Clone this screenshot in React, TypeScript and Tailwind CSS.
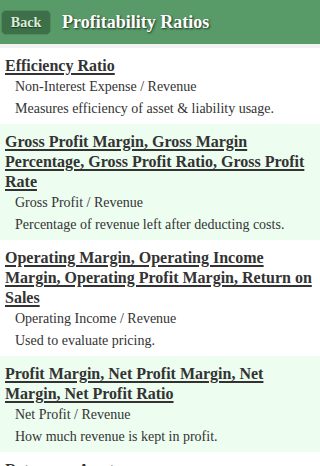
const RATIOS = [
  {
    title: 'Efficiency Ratio',
    formula: 'Non-Interest Expense / Revenue',
    note: 'Measures efficiency of asset & liability usage.',
  },
  {
    title: 'Gross Profit Margin, Gross Margin Percentage, Gross Profit Ratio, Gross Profit Rate',
    formula: 'Gross Profit / Revenue',
    note: 'Percentage of revenue left after deducting costs.',
  },
  {
    title: 'Operating Margin, Operating Income Margin, Operating Profit Margin, Return on Sales',
    formula: 'Operating Income / Revenue',
    note: 'Used to evaluate pricing.',
  },
  {
    title: 'Profit Margin, Net Profit Margin, Net Margin, Net Profit Ratio',
    formula: 'Net Profit / Revenue',
    note: 'How much revenue is kept in profit.',
  },
  {
    title: 'Return on Assets',
    formula: 'Net Income / Total Assets',
    note: 'How efficiently assets generate profit.',
  },
];

export default function App() {
  return (
    <div className="w-[320px] h-[466px] overflow-hidden bg-white font-['Liberation_Serif',serif] text-[#333]">
      <div className="h-[44px] bg-[#589a68] flex items-center pl-px">
        <button className="h-[25px] w-[50px] rounded-[5px] bg-[#3d6f48] border border-[#4f8a5c] text-[14px] font-bold text-[#dbeedd] [text-shadow:0_1px_1px_#1d3a24]">
          Back
        </button>
        <h1 className="ml-[11px] text-[18px] font-bold text-white [text-shadow:1px_1px_2px_#1c3322]">
          Profitability Ratios
        </h1>
      </div>
      <div className="h-[4px] bg-[#f2f2f2]" />
      {RATIOS.map((r, i) => (
        <div key={r.title} className={`pl-[5px] pr-2 pt-[8px] pb-[4px] ${i % 2 ? 'bg-[#edfdf0]' : 'bg-white'}`}>
          <h2 className="text-[16px] leading-[20px] font-bold underline decoration-2 underline-offset-[2px]">
            {r.title}
          </h2>
          <div className="pl-[10px] text-[14px] leading-[22px]">
            <p>{r.formula}</p>
            <p>{r.note}</p>
          </div>
        </div>
      ))}
    </div>
  );
}
